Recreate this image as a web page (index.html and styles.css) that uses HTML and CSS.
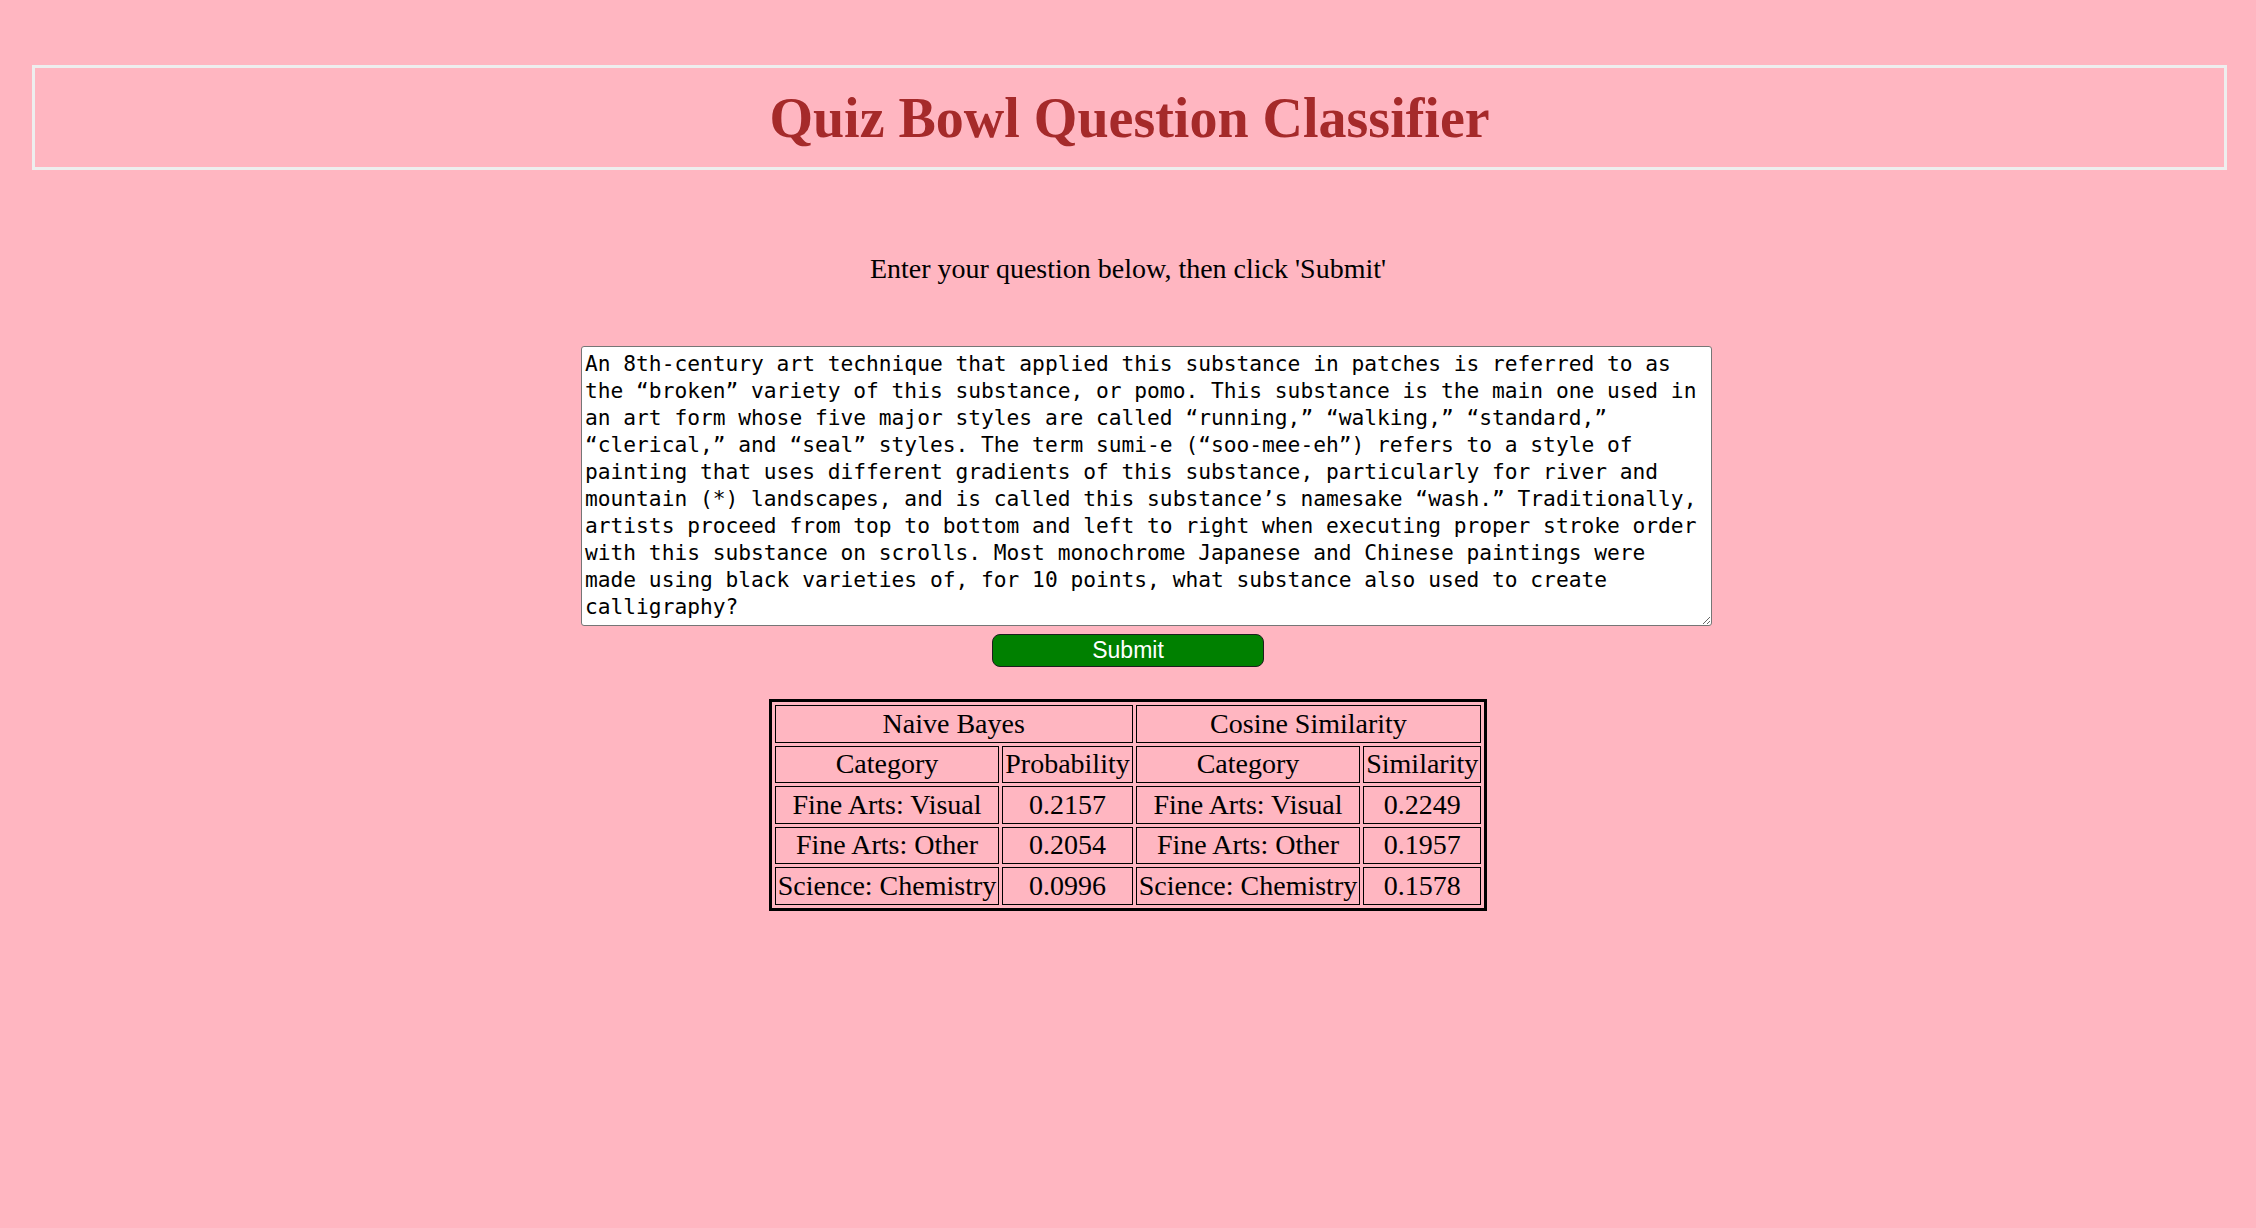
FILE: index.html
```html
<!DOCTYPE html>
<html lang="en">
<head>
<meta charset="utf-8">
<title>Quiz Bowl Question Classifier</title>
<link rel="stylesheet" href="styles.css">
</head>
<body>
<header class="banner">
  <h1 class="title">Quiz Bowl Question Classifier</h1>
</header>
<main class="content">
  <p class="prompt">Enter your question below, then click 'Submit'</p>
  <form class="ask">
    <textarea class="question" spellcheck="false">An 8th-century art technique that applied this substance in patches is referred to as the “broken” variety of this substance, or pomo. This substance is the main one used in an art form whose five major styles are called “running,” “walking,” “standard,” “clerical,” and “seal” styles. The term sumi-e (“soo-mee-eh”) refers to a style of painting that uses different gradients of this substance, particularly for river and mountain (*) landscapes, and is called this substance’s namesake “wash.” Traditionally, artists proceed from top to bottom and left to right when executing proper stroke order with this substance on scrolls. Most monochrome Japanese and Chinese paintings were made using black varieties of, for 10 points, what substance also used to create calligraphy?</textarea>
    <button class="submit" type="button">Submit</button>
  </form>
  <table class="results">
    <tr>
      <td colspan="2">Naive Bayes</td>
      <td colspan="2">Cosine Similarity</td>
    </tr>
    <tr>
      <td>Category</td>
      <td>Probability</td>
      <td>Category</td>
      <td>Similarity</td>
    </tr>
    <tr>
      <td>Fine Arts: Visual</td>
      <td>0.2157</td>
      <td>Fine Arts: Visual</td>
      <td>0.2249</td>
    </tr>
    <tr>
      <td>Fine Arts: Other</td>
      <td>0.2054</td>
      <td>Fine Arts: Other</td>
      <td>0.1957</td>
    </tr>
    <tr>
      <td>Science: Chemistry</td>
      <td>0.0996</td>
      <td>Science: Chemistry</td>
      <td>0.1578</td>
    </tr>
  </table>
</main>
</body>
</html>
```
FILE: styles.css
```css
html, body {
  margin: 0;
  padding: 0;
}

body {
  background: #ffb6c1;
  font-family: "Liberation Serif", "Times New Roman", serif;
  color: #000;
}

.banner {
  margin: 65px 29px 0 32px;
  border: 3px solid #eeeeee;
}

.title {
  margin: 0;
  padding-top: 1px;
  font-size: 56px;
  line-height: 98px;
  font-weight: bold;
  text-align: center;
  color: #a52a2a;
}

.content {
  display: flex;
  flex-direction: column;
  align-items: center;
}

.prompt {
  margin: 83px 0 0;
  font-size: 28px;
  line-height: 32px;
}

.ask {
  display: flex;
  flex-direction: column;
  align-items: center;
  margin-top: 61px;
}

.question {
  box-sizing: border-box;
  width: 1131px;
  height: 280px;
  margin: 0 0 0 37px;
  padding: 3px;
  border: 1px solid #767676;
  border-radius: 3px;
  background: #fff;
  color: #000;
  font-family: "DejaVu Sans Mono", "Liberation Mono", monospace;
  font-size: 21.23px;
  line-height: 27px;
  resize: both;
}

.submit {
  box-sizing: border-box;
  width: 272px;
  height: 33px;
  margin-top: 8px;
  padding: 0;
  border: 1.5px solid #1e1e1e;
  border-radius: 8px;
  background: #008000;
  color: #fff;
  font-family: "Liberation Sans", Arial, sans-serif;
  font-size: 23px;
}

.results {
  margin-top: 32px;
  border: 3px solid #000;
  border-spacing: 3px;
  font-size: 28px;
  line-height: 32px;
}

.results td {
  border: 1px solid #000;
  padding: 1.75px 2px;
  text-align: center;
  white-space: nowrap;
}
```
